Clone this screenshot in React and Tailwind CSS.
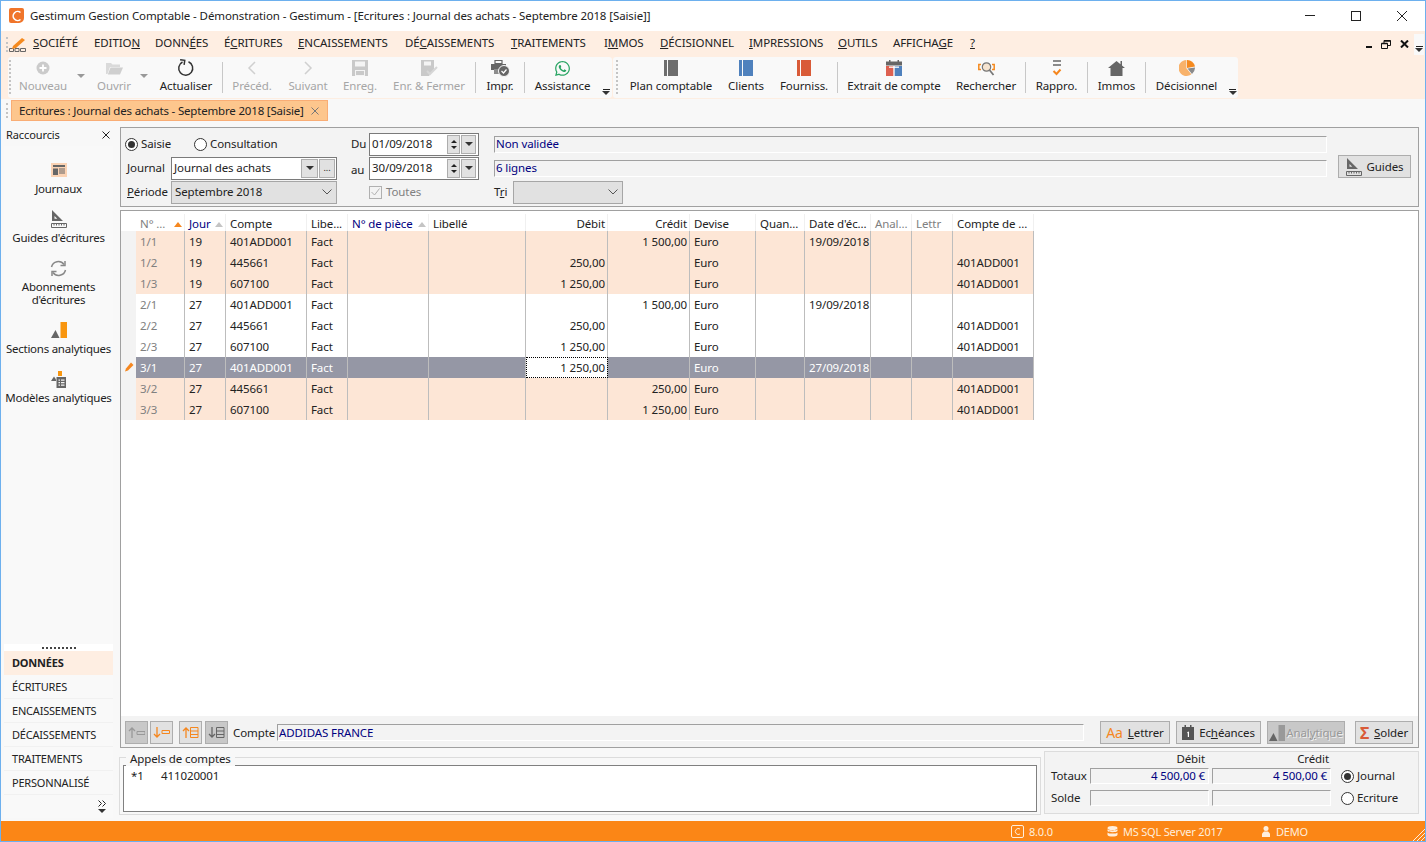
import React from "react";
import { FaWhatsapp } from "react-icons/fa";

const Grip = () => <div className="w-[2px] h-[34px] border-l-2 border-dotted border-[#c4c4c4]" />;
const Sep = () => <div className="w-px h-[31px] self-center bg-[#c8c8c8]" />;
const Caret = ({ className = "" }) => <div className={`w-0 h-0 border-x-[4px] border-x-transparent border-t-[4px] border-t-[#333] ${className}`} />;
const Overflow = ({ className = "" }) => (
  <div className={`flex flex-col items-center ${className}`}>
    <div className="w-[7px] h-px bg-[#222] mb-px" />
    <Caret />
  </div>
);

// toolbar icons
const Plus = () => (
  <svg width="14" height="14" viewBox="0 0 14 14"><circle cx="7" cy="7" r="6.500" fill="#cbcbcb" /><path d="M7 3.500v7M3.500 7h7" stroke="#fff" strokeWidth="1.800" /></svg>
);
const Folder = () => (
  <svg width="17" height="14" viewBox="0 0 17 14"><path d="M0 2h5l1.500 1.500H14V6H4L1.500 13H0z" fill="#dadada" /><path d="M4.500 6.500H17L14 13.500H1.800z" fill="#cfcfcf" /></svg>
);
const Refresh = () => (
  <svg width="18" height="18" viewBox="0 0 18 18" fill="none"><path d="M11.500 2.800A7 7 0 1 1 5.500 3" stroke="#333" strokeWidth="1.500" /><path d="M2.800 1H7.500V5.600" stroke="#333" strokeWidth="1.500" transform="rotate(8 5 3)" /></svg>
);
const ChevL = () => <svg width="10" height="14" viewBox="0 0 10 14" fill="none"><path d="M8 1L2 7l6 6" stroke="#d0d0d0" strokeWidth="1.500" /></svg>;
const ChevR = () => <svg width="10" height="14" viewBox="0 0 10 14" fill="none"><path d="M2 1l6 6-6 6" stroke="#d0d0d0" strokeWidth="1.500" /></svg>;
const Floppy = () => (
  <svg width="16" height="16" viewBox="0 0 16 16"><path d="M0 0h16v16H0z" fill="#c9c9c9" /><path d="M3 1.500h10v5H3zM3 10h10v6H3z" fill="#f4f4f4" /><path d="M4 11h8v4H4z" fill="#c9c9c9" /></svg>
);
const FloppyOk = () => (
  <svg width="18" height="16" viewBox="0 0 18 16"><path d="M1 0h13v9l-5 7H1z" fill="#c9c9c9" /><path d="M4 1.500h7v4H4z" fill="#f4f4f4" /><path d="M7 11l3 3 7-7" fill="none" stroke="#d6d6d6" strokeWidth="2" /></svg>
);
const Printer = () => (
  <svg width="19" height="17" viewBox="0 0 19 17"><path d="M4 0.500h7v3H4z" fill="none" stroke="#666" strokeWidth="1.200" /><path d="M0 4h15v6H0z" fill="#666" /><path d="M3 9h8v5H3z" fill="#8d8d8d" /><circle cx="13" cy="11" r="5.500" fill="#666" stroke="#f9f9f9" /><path d="M10.500 11l2 2 3-3.500" fill="none" stroke="#fff" strokeWidth="1.200" /></svg>
);
const Book = ({ color }) => (
  <svg width="14" height="16" viewBox="0 0 14 16"><path d="M0 0h3v16H0zM4 0h10v16H4z" fill={color} /></svg>
);
const Calendar = () => (
  <svg width="16" height="16" viewBox="0 0 16 16"><path d="M0 1.500h16v4H0z" fill="#666" /><path d="M3 0h1.500v2H3zM11.500 0H13v2h-1.500z" fill="#666" /><path d="M0 6h7.300v10H0z" fill="#dd6050" /><path d="M8.700 6H16v10H8.700z" fill="#4f81bd" /><path d="M3 6.500h10v1.300H3z" fill="#fff" /></svg>
);
const Search = () => (
  <svg className="mt-[3px]" width="17" height="15" viewBox="0 0 17 15" fill="none"><path d="M3 2.500H0.800v5H3M14 2.500h2.200v5H14" stroke="#f58a1f" strokeWidth="1.500" /><circle cx="8.500" cy="5" r="4.200" fill="#f6e4d0" stroke="#777" strokeWidth="1.200" /><path d="M11.500 8L15.500 13" stroke="#777" strokeWidth="1.800" /></svg>
);
const Rappro = () => (
  <svg width="10" height="16" viewBox="0 0 10 16" fill="none"><path d="M1 1h8M1 5h8" stroke="#666" strokeWidth="1.600" /><path d="M1.500 11l3 3 4-4.500" stroke="#f5871f" strokeWidth="2" /></svg>
);
const House = () => (
  <svg width="17" height="16" viewBox="0 0 17 16"><path d="M8.500 1L0 8h2.500v8h12V8H17l-3-2.500V1h-1.500v3.200z" fill="#666" /></svg>
);
const Pie = () => (
  <svg width="16" height="16" viewBox="0 0 16 16"><path d="M8 8V0a8 8 0 0 1 8 6.500z" fill="#f58a1f" /><path d="M8.500 8.500L16 7.500a8 8 0 0 1-3 6.500z" fill="#8a8a8a" /><path d="M7.400 0v8.300l5 6A8 8 0 1 1 7.400 0z" fill="#f8b26a" /></svg>
);
const SetSquare = ({ color = "#666" }) => (
  <svg width="16" height="18" viewBox="0 0 16 18"><path d="M1 0l11 11H1zM3.500 6v2.800h2.800z" fill={color} fillRule="evenodd" /><path d="M0.500 13.500h15v4h-15z" fill="none" stroke={color} /><path d="M3 14v1.500M5.500 14v1.500M8 14v1.500M10.500 14v1.500M13 14v1.500" stroke={color} /></svg>
);

const leftTools = [
  { label: "Nouveau", w: "w-[58px]", icon: <Plus />, off: true },
  { caret: true, w: "w-[18px]" },
  { label: "Ouvrir", w: "w-[48px]", icon: <Folder />, off: true },
  { caret: true, w: "w-[12px]" },
  { label: "Actualiser", w: "w-[72px]", icon: <Refresh /> },
  { sep: true },
  { label: "Précéd.", w: "w-[58px]", icon: <ChevL />, off: true },
  { label: "Suivant", w: "w-[54px]", icon: <ChevR />, off: true },
  { label: "Enreg.", w: "w-[50px]", icon: <Floppy />, off: true },
  { label: "Enr. & Fermer", w: "w-[88px] mr-[2px]", icon: <FloppyOk />, off: true },
  { sep: true },
  { label: "Impr.", w: "w-[48px]", icon: <Printer /> },
  { sep: true },
  { label: "Assistance", w: "w-[75px]", icon: <FaWhatsapp className="text-[17px] text-[#2aa564]" /> },
];
const rightTools = [
  { label: "Plan comptable", w: "w-[100px]", icon: <Book color="#6d6d6d" /> },
  { label: "Clients", w: "w-[50px]", icon: <Book color="#4f81bd" /> },
  { label: "Fourniss.", w: "w-[66px]", icon: <Book color="#d95b38" /> },
  { sep: true },
  { label: "Extrait de compte", w: "w-[112px]", icon: <Calendar /> },
  { label: "Rechercher", w: "w-[72px] mr-[3px]", icon: <Search /> },
  { sep: true },
  { label: "Rappro.", w: "w-[61px]", icon: <Rappro /> },
  { sep: true },
  { label: "Immos", w: "w-[57px]", icon: <House /> },
  { sep: true },
  { label: "Décisionnel", w: "w-[81px]", icon: <Pie /> },
];

const Tool = ({ t }) => {
  if (t.sep) return <Sep />;
  if (t.caret)
    return (
      <div className={`${t.w} flex justify-center pt-[17px]`}>
        <div className="w-0 h-0 border-x-[4px] border-x-transparent border-t-[4px] border-t-[#999]" />
      </div>
    );
  return (
    <div className={`${t.w} flex flex-col items-center shrink-0 whitespace-nowrap ${t.off ? "text-[#a6a6a6]" : "text-[#222]"}`}>
      <div className="h-[21px] pt-px flex items-center justify-center">{t.icon}</div>
      <div className="leading-[16px]">{t.label}</div>
    </div>
  );
};

const menu = [
  [<><u>S</u>OCIÉTÉ</>, "w-[61px]"],
  [<>EDITIO<u>N</u></>, "w-[61px]"],
  [<>DONN<u>É</u>ES</>, "w-[69px]"],
  [<>É<u>C</u>RITURES</>, "w-[74px]"],
  [<><u>E</u>NCAISSEMENTS</>, "w-[107px]"],
  [<>DÉ<u>C</u>AISSEMENTS</>, "w-[106px]"],
  [<><u>T</u>RAITEMENTS</>, "w-[93px]"],
  [<>I<u>M</u>MOS</>, "w-[56px]"],
  [<><u>D</u>ÉCISIONNEL</>, "w-[89px]"],
  [<><u>I</u>MPRESSIONS</>, "w-[89px]"],
  [<><u>O</u>UTILS</>, "w-[55px]"],
  [<>AFFICHA<u>G</u>E</>, "w-[77px]"],
  [<u>?</u>, "w-[20px]"],
];

const gridCols = "grid grid-cols-[15px_49px_41px_81px_41px_81px_97px_82px_82px_66px_49px_66px_41px_41px_81px]";
const gridInner = "grid grid-cols-[49px_41px_81px_41px_81px_97px_82px_82px_66px_49px_66px_41px_41px_81px]";

const rows = [
  ["1/1", "19", "401ADD001", "", "1 500,00", "19/09/2018", "", "p"],
  ["1/2", "19", "445661", "250,00", "", "", "401ADD001", "p"],
  ["1/3", "19", "607100", "1 250,00", "", "", "401ADD001", "p"],
  ["2/1", "27", "401ADD001", "", "1 500,00", "19/09/2018", "", "w"],
  ["2/2", "27", "445661", "250,00", "", "", "401ADD001", "w"],
  ["2/3", "27", "607100", "1 250,00", "", "", "401ADD001", "w"],
  ["3/1", "27", "401ADD001", "1 250,00", "", "27/09/2018", "", "s"],
  ["3/2", "27", "445661", "", "250,00", "", "401ADD001", "p"],
  ["3/3", "27", "607100", "", "1 250,00", "", "401ADD001", "p"],
];

const Cell = ({ children, right, focus, className = "" }) => (
  <div className={`border-r border-[#bdbdbd] whitespace-nowrap overflow-hidden flex items-center ${right ? "justify-end pr-[2px]" : "pl-[4px]"} ${focus ? "bg-white text-[#222] outline-1 outline-dotted outline-black -outline-offset-1" : ""} ${className}`}>
    {children}
  </div>
);

const Head = ({ children, right, sort, className = "" }) => (
  <div className={`border-r border-[#f0f0f0] whitespace-nowrap overflow-hidden pt-[3px] flex items-center ${right ? "justify-end pr-[2px]" : "justify-between pl-[4px] pr-[2px]"} ${className}`}>
    <span>{children}</span>
    {sort && <div className={`w-0 h-0 border-x-[4px] border-x-transparent border-b-[5px] ${sort}`} />}
  </div>
);

const Row = ({ r }) => {
  const [n, jour, compte, debit, credit, date, contre, kind] = r;
  const bg = kind === "p" ? "bg-[#fde6d6]" : kind === "s" ? "bg-[#9597a5] text-white" : "bg-white";
  return (
    <div className={`${gridCols} h-[21px] text-[#222]`}>
      <div className="bg-[#f3f3f3] flex items-center justify-center">
        {kind === "s" && (
          <svg width="10" height="11" viewBox="0 0 10 11"><path d="M7 0.500l2.500 2.500-5.500 5.500L1 9.500l1-3z" fill="#f5871f" /></svg>
        )}
      </div>
      <div className={`col-span-14 ${gridInner} ${bg}`}>
        <Cell className={kind === "s" ? "" : "text-[#808080]"}>{n}</Cell>
        <Cell>{jour}</Cell>
        <Cell>{compte}</Cell>
        <Cell>Fact</Cell>
        <Cell />
        <Cell />
        <Cell right focus={kind === "s"}>{debit}</Cell>
        <Cell right>{credit}</Cell>
        <Cell>Euro</Cell>
        <Cell />
        <Cell>{date}</Cell>
        <Cell />
        <Cell />
        <Cell>{contre}</Cell>
      </div>
    </div>
  );
};

const Radio = ({ on }) => (
  <div className="w-[13px] h-[13px] rounded-full border border-[#333] bg-white flex items-center justify-center shrink-0">
    {on && <div className="w-[7px] h-[7px] rounded-full bg-[#333]" />}
  </div>
);
const Sunken = ({ children, className = "" }) => (
  <div className={`border-t border-l border-[#a0a0a0] border-b border-r border-b-white border-r-white flex items-center px-px text-[#000080] whitespace-nowrap ${className}`}>
    {children}
  </div>
);
const Btn = ({ children, className = "" }) => (
  <div className={`h-[23px] border border-[#adadad] flex items-center justify-center ${className}`}>{children}</div>
);
const Chevron = () => <svg width="10" height="6" viewBox="0 0 10 6" fill="none"><path d="M0.500 0.500L5 5l4.500-4.500" stroke="#555" /></svg>;

const DateBox = ({ value }) => (
  <div className="w-[110px] h-[23px] border border-[#7a7a7a] bg-white flex items-center">
    <span className="pl-[2px] w-[77px] text-[#222]">{value}</span>
    <div className="w-[13px] h-[19px] bg-[#e1e1e1] border border-[#adadad] flex flex-col items-center justify-center gap-[3px]">
      <div className="w-0 h-0 border-x-[3px] border-x-transparent border-b-[3px] border-b-[#222]" />
      <div className="w-0 h-0 border-x-[3px] border-x-transparent border-t-[3px] border-t-[#222]" />
    </div>
    <div className="ml-px w-[15px] h-[19px] bg-[#e1e1e1] border border-[#adadad] flex items-center justify-center"><Caret /></div>
  </div>
);

const ArrowBtn = ({ children, dark }) => (
  <div className={`w-[23px] h-[23px] border border-[#adadad] flex items-center justify-center ${dark ? "bg-[#c8c8c8]" : "bg-[#e1e1e1]"}`}>{children}</div>
);

const sideTop = [
  { label: ["Journaux"], h: "h-[49px]", icon: (
    <svg width="16" height="14" viewBox="0 0 16 14"><path d="M0 0h16v14H0z" fill="#fbd3b4" /><path d="M2 2h12v2H2zM2 5.500h5V12H2zM8 5.500h6v1H8zM8 7.500h6v1H8zM8 9.500h6v1H8z" fill="#666" /></svg>
  ) },
  { label: ["Guides d'écritures"], h: "h-[49px]", icon: <SetSquare /> },
  { label: ["Abonnements", "d'écritures"], h: "h-[62px]", icon: (
    <svg width="17" height="17" viewBox="0 0 17 17" fill="none"><path d="M1.500 7A7 7 0 0 1 14 4.500M15.500 10A7 7 0 0 1 3 12.500" stroke="#888" strokeWidth="1.500" /><path d="M15 1v4.500h-4.500M2 16v-4.500h4.500" stroke="#888" strokeWidth="1.500" /></svg>
  ) },
  { label: ["Sections analytiques"], h: "h-[49px]", icon: (
    <svg width="16" height="16" viewBox="0 0 16 16"><path d="M0 16L4.500 8l4 8z" fill="#666" /><path d="M9.500 0H16v16H9.500z" fill="#f9960f" /></svg>
  ) },
  { label: ["Modèles analytiques"], h: "h-[49px]", icon: (
    <svg width="15" height="17" viewBox="0 0 15 17"><path d="M7 0h4v5H7z" fill="#f9960f" /><path d="M0 10l3-4.500 2 3V10z" fill="#666" /><path d="M5.500 6H15v11H5.500z" fill="#666" /><path d="M7.500 8.500h1.500v1.200H7.500zM10 8.500h3.500v1.200H10zM7.500 11h1.500v1.200H7.500zM10 11h3.500v1.200H10zM7.500 13.500h1.500v1.200H7.500zM10 13.500h3.500v1.200H10z" fill="#f3f3f3" /></svg>
  ) },
];
const sideBottom = ["ÉCRITURES", "ENCAISSEMENTS", "DÉCAISSEMENTS", "TRAITEMENTS", "PERSONNALISÉ"];

export default function App() {
  return (
    <div className="w-[1426px] h-[842px] flex flex-col overflow-hidden border border-[#6db0ee] bg-[#f8f8f8] text-[11.500px] tracking-[-0.1px] leading-[16px] text-[#222] font-['Noto_Sans',sans-serif]">
      {/* title bar */}
      <div className="h-[30px] shrink-0 bg-white flex items-center pb-px">
        <div className="w-[15px] h-[15px] ml-[8px] rounded-[2px] rounded-br-[5px] bg-[#f0752a] flex items-center justify-center">
          <svg width="12" height="12" viewBox="0 0 12 12" fill="none"><path d="M9.500 2.500A4.500 4.500 0 1 0 9.500 9.500" stroke="#fff" strokeWidth="1.600" /></svg>
        </div>
        <span className="ml-[6px]">Gestimum Gestion Comptable - Démonstration - Gestimum - [Ecritures : Journal des achats - Septembre 2018 [Saisie]]</span>
        <div className="ml-auto flex items-center">
          <div className="w-[46px] flex justify-center"><div className="w-[10px] h-px bg-[#222]" /></div>
          <div className="w-[46px] flex justify-center"><div className="w-[10px] h-[10px] border border-[#222]" /></div>
          <div className="w-[46px] flex justify-center">
            <svg width="10" height="10" viewBox="0 0 10 10"><path d="M0 0l10 10M10 0L0 10" stroke="#222" /></svg>
          </div>
        </div>
      </div>
      {/* menu bar */}
      <div className="h-[26px] shrink-0 bg-[#feeee2] flex items-center">
        <div className="w-[6px] ml-[5px] h-[15px] border-l-2 border-dotted border-[#c4c4c4]" />
        <svg className="-ml-[3px]" width="17" height="15" viewBox="0 0 17 15" fill="none"><path d="M0.500 14.500h4v-3h-4zM6 14.500h4v-3H6zM11.500 14.500h5v-3h-5z" stroke="#666" /><path d="M4 9l9-8 3 2-9 8-4 1z" fill="#f58a1f" /></svg>
        <div className="ml-[7px] flex items-center pb-[2px]">
          {menu.map(([label, w], i) => (
            <div key={i} className={`${w} whitespace-nowrap`}>{label}</div>
          ))}
        </div>
        <div className="ml-auto flex items-center h-full">
          <div className="w-[6px] h-[2px] bg-[#111] mt-[6px]" />
          <svg className="ml-[9px]" width="10" height="9" viewBox="0 0 10 9" fill="none"><path d="M0.500 3.500h6v5h-6zM3 3V0.500h6.500v5H7" stroke="#111" /><path d="M0.500 3.500h6M3 1h6.500" stroke="#111" strokeWidth="1.500" /></svg>
          <svg className="ml-[9px]" width="9" height="8" viewBox="0 0 9 8"><path d="M1 0.500l7 7M8 0.500l-7 7" stroke="#111" strokeWidth="2" /></svg>
          <div className="ml-[5px] w-[10px] h-[21px] bg-[#f9f9f9] flex items-end justify-center pb-[3px]"><Overflow /></div>
          <div className="w-px" />
        </div>
      </div>
      {/* toolbar */}
      <div className="h-[41px] shrink-0 bg-[#feeee2] flex pl-[7px] gap-px">
        <div className="w-[604px] bg-[#f9f9f9] rounded-[3px] flex">
          <div className="w-[6px] pt-[3px] pl-px"><Grip /></div>
          {leftTools.map((t, i) => <Tool key={i} t={t} />)}
          <Overflow className="w-[12px] mt-auto mb-[3px]" />
        </div>
        <div className="w-[625px] bg-[#f9f9f9] rounded-[3px] flex">
          <div className="w-[8px] pt-[3px] pl-[3px]"><Grip /></div>
          {rightTools.map((t, i) => <Tool key={i} t={t} />)}
          <Overflow className="w-[11px] mt-auto mb-[3px]" />
        </div>
      </div>
      {/* tabs */}
      <div className="h-[26px] shrink-0 flex items-center border-t border-[#fdeee2] pb-[2px]">
        <div className="w-[4px] ml-[5px] h-[15px] border-l-2 border-dotted border-[#c4c4c4]" />
        <div className="h-[21px] w-[317px] ml-px bg-[#fdc68d] border border-[#f9ad75] flex items-center pl-[7px] whitespace-nowrap tracking-[-0.18px]">
          <span>Ecritures : Journal des achats - Septembre 2018 [Saisie]</span>
          <svg className="ml-[7px]" width="8" height="8" viewBox="0 0 8 8"><path d="M0.500 0.500l7 7M7.500 0.500l-7 7" stroke="#777" /></svg>
        </div>
      </div>
      {/* body */}
      <div className="flex-1 flex min-h-0">
        {/* shortcuts */}
        <div className="w-[118px] shrink-0 flex flex-col pb-[3px]">
          <div className="h-[22px] flex items-center justify-between pl-[5px] pr-[9px] text-[11px]">
            <span>Raccourcis</span>
            <svg width="8" height="8" viewBox="0 0 8 8"><path d="M0.500 0.500l7 7M7.500 0.500l-7 7" stroke="#222" /></svg>
          </div>
          <div className="ml-[3px] w-[109px] flex-1 flex flex-col bg-[#f9f9f9]">
            <div className="pt-[15px]">
              {sideTop.map((s) => (
                <div key={s.label[0]} className={`${s.h} flex flex-col items-center text-center whitespace-nowrap`}>
                  <div className="h-[18px] flex items-center">{s.icon}</div>
                  <div className="mt-[3px] leading-[13px] tracking-[-0.25px]">
                    {s.label.map((l) => <div key={l}>{l}</div>)}
                  </div>
                </div>
              ))}
            </div>
            <div className="mt-auto bg-white h-[7px] flex items-center justify-center">
              <div className="w-[34px] border-t-2 border-dotted border-[#444]" />
            </div>
            <div className="h-[24px] bg-[#feeee2] flex items-center pl-[8px] font-bold text-[11px] tracking-[-0.2px]">DONNÉES</div>
            {sideBottom.map((s) => (
              <div key={s} className="h-[24px] border-b border-[#f1f1f1] flex items-center pl-[8px] text-[11px] tracking-[-0.2px]">{s}</div>
            ))}
            <div className="h-[23px] flex flex-col items-end pr-[7px] pt-[5px]">
              <svg width="8" height="7" viewBox="0 0 8 7" fill="none"><path d="M0.500 0.500l3 3-3 3M4.500 0.500l3 3-3 3" stroke="#222" /></svg>
              <Caret className="mt-[2px]" />
            </div>
          </div>
        </div>
        {/* main */}
        <div className="flex-1 flex flex-col pl-px pr-[7px] pt-[3px] pb-[6px]">
          {/* filters */}
          <div className="h-[80px] shrink-0 border border-[#a0a0a0] bg-[#f3f3f3] flex pt-[4px] pl-[4px]">
            <div className="w-[212px] shrink-0 flex flex-col">
              <div className="h-[24px] flex items-center">
                <Radio on />
                <span className="ml-[3px] w-[40px]">Saisie</span>
                <div className="ml-[13px]"><Radio /></div>
                <span className="ml-[3px]">Consultation</span>
              </div>
              <div className="h-[24px] flex items-center">
                <span className="ml-[2px] w-[44px]"><u>J</u>ournal</span>
                <div className="w-[166px] h-[23px] border border-[#7a7a7a] bg-white flex items-center">
                  <span className="pl-[2px] w-[129px] whitespace-nowrap">Journal des achats</span>
                  <div className="w-[17px] h-[19px] bg-[#e1e1e1] border border-[#adadad] flex items-center justify-center"><Caret /></div>
                  <div className="ml-px w-[16px] h-[19px] bg-[#e1e1e1] border border-[#adadad] flex items-center justify-center text-[9px]">...</div>
                </div>
              </div>
              <div className="h-[24px] flex items-center">
                <span className="ml-[2px] w-[44px]"><u>P</u>ériode</span>
                <div className="w-[166px] h-[23px] border border-[#a6a6a6] bg-[#e1e1e1] flex items-center justify-between pl-[3px] pr-[4px]">
                  <span>Septembre 2018</span>
                  <Chevron />
                </div>
              </div>
            </div>
            <div className="ml-[14px] w-[128px] shrink-0 flex flex-col">
              <div className="h-[24px] flex items-center"><span className="w-[18px]">Du</span><DateBox value="01/09/2018" /></div>
              <div className="h-[24px] flex items-center"><span className="w-[18px] pt-[3px]">au</span><DateBox value="30/09/2018" /></div>
              <div className="h-[24px] flex items-center pl-[18px] text-[#808080]">
                <div className="w-[13px] h-[13px] border border-[#b0b0b0] flex items-center justify-center">
                  <svg width="9" height="8" viewBox="0 0 9 8" fill="none"><path d="M0.500 4l3 3 5-6.500" stroke="#b0b0b0" /></svg>
                </div>
                <span className="ml-[4px]">Toutes</span>
              </div>
            </div>
            <div className="ml-[15px] w-[833px] shrink-0 flex flex-col">
              <div className="h-[24px] flex items-center"><Sunken className="w-full h-[17px]">Non validée</Sunken></div>
              <div className="h-[24px] flex items-center"><Sunken className="w-full h-[17px]">6 lignes</Sunken></div>
              <div className="h-[24px] flex items-center">
                <span className="w-[19px]">T<u>r</u>i</span>
                <div className="w-[110px] h-[23px] border border-[#a6a6a6] bg-[#e1e1e1] flex items-center justify-end pr-[4px]"><Chevron /></div>
              </div>
            </div>
            <div className="ml-[11px] h-[48px] flex items-end pb-[2px]">
              <Btn className="w-[73px] gap-[5px] bg-[#e1e1e1]"><SetSquare /><span>Guides</span></Btn>
            </div>
          </div>
          {/* grid */}
          <div className="mt-[3px] flex-1 flex flex-col min-h-0 border border-[#a0a0a0] bg-[#f3f3f3]">
            <div className="flex-1 bg-white pt-[3px]">
              <div className={`${gridCols} h-[17px]`}>
                <div />
                <Head className="text-[#808080]" sort="border-b-[#f5871f]">N° ...</Head>
                <Head className="text-[#000080]" sort="border-b-[#c4c4c4]">Jour</Head>
                <Head>Compte</Head>
                <Head>Libe...</Head>
                <Head className="text-[#000080]" sort="border-b-[#c4c4c4]">N° de pièce</Head>
                <Head>Libellé</Head>
                <Head right>Débit</Head>
                <Head right>Crédit</Head>
                <Head>Devise</Head>
                <Head>Quan...</Head>
                <Head>Date d'éc...</Head>
                <Head className="text-[#808080]">Anal...</Head>
                <Head className="text-[#808080]">Lettr</Head>
                <Head>Compte de ...</Head>
              </div>
              {rows.map((r) => <Row key={r[0]} r={r} />)}
            </div>
            <div className="h-[31px] shrink-0 flex items-center pl-[4px] pt-[2px]">
              <ArrowBtn dark>
                <svg width="17" height="13" viewBox="0 0 17 13" fill="none"><path d="M4 12V2M1 5l3-3 3 3" stroke="#999" strokeWidth="1.300" /><path d="M9 5.500h8v3H9z" stroke="#999" /></svg>
              </ArrowBtn>
              <div className="ml-[2px]">
                <ArrowBtn>
                  <svg width="17" height="13" viewBox="0 0 17 13" fill="none"><path d="M4 1v10M1 8l3 3 3-3" stroke="#f5871f" strokeWidth="1.300" /><path d="M9 4.500h7.500v3H9z" stroke="#f5871f" /></svg>
                </ArrowBtn>
              </div>
              <div className="ml-[6px]">
                <ArrowBtn>
                  <svg width="17" height="13" viewBox="0 0 17 13" fill="none"><path d="M4 12V2M1 5l3-3 3 3" stroke="#f5871f" strokeWidth="1.300" /><path d="M8.500 1.500h7.500v10H8.500zM8.500 5h7.500M8.500 8.500h7.500" stroke="#f5871f" /></svg>
                </ArrowBtn>
              </div>
              <div className="ml-[3px]">
                <ArrowBtn dark>
                  <svg width="17" height="13" viewBox="0 0 17 13" fill="none"><path d="M4 1v10M1 8l3 3 3-3" stroke="#666" strokeWidth="1.300" /><path d="M8.500 1.500h7.500v10H8.500zM8.500 5h7.500M8.500 8.500h7.500" stroke="#666" /></svg>
                </ArrowBtn>
              </div>
              <span className="ml-[5px] w-[44px]">Compte</span>
              <Sunken className="w-[807px] h-[17px]">ADDIDAS FRANCE</Sunken>
              <Btn className="ml-[16px] w-[70px] gap-[5px] bg-[#e1e1e1]">
                <span className="text-[#f5871f] text-[14px] leading-none">Aa</span><span><u>L</u>ettrer</span>
              </Btn>
              <Btn className="ml-[6px] w-[85px] gap-[5px] bg-[#e1e1e1]">
                <svg width="12" height="15" viewBox="0 0 12 15"><path d="M0 2h12v13H0z" fill="#555" /><path d="M2.500 0H4v2H2.500zM8 0h1.500v2H8z" fill="#555" /><path d="M5.500 7L7 6.500V12H5.800V8L5 8.200z" fill="#fff" /></svg>
                <span>Ec<u>h</u>éances</span>
              </Btn>
              <Btn className="ml-[6px] w-[78px] gap-px bg-[#c8c8c8]">
                <svg width="16" height="16" viewBox="0 0 16 16"><path d="M0 16L4.500 8l4 8z" fill="#666" /><path d="M9.500 0H16v16H9.500z" fill="#999" /></svg>
                <span className="text-[#999] [text-shadow:1px_1px_#eee]">Anal<u>y</u>tique</span>
              </Btn>
              <Btn className="ml-[10px] w-[58px] gap-[5px] bg-[#e1e1e1]">
                <span className="text-[#d95b38] text-[16px] font-bold leading-none">Σ</span><span><u>S</u>older</span>
              </Btn>
            </div>
          </div>
          {/* bottom */}
          <div className="mt-[3px] h-[64px] shrink-0 flex">
            <div className="w-[922px] -ml-px h-[58px] mt-[6px] border border-[#dcdcdc] px-[3px] pt-[7px] relative">
              <span className="absolute left-[6px] -top-[6px] px-[4px] bg-[#f8f8f8] leading-[14px]">Appels de comptes</span>
              <div className="h-[47px] w-[914px] border border-[#808080] bg-white flex pt-[2px] pl-[7px]">
                <span className="w-[30px]">*1</span>
                <span>411020001</span>
              </div>
            </div>
            <div className="ml-[3px] w-[375px] h-[63px] border border-[#dcdcdc] bg-[#f3f3f3]">
              <div className="flex h-[13px] leading-[13px] pl-[45px]">
                <div className="w-[115px] text-right">Débit</div>
                <div className="w-[124px] text-right">Crédit</div>
              </div>
              <div className="flex items-center h-[22px] pl-[6px]">
                <span className="w-[39px]">Totaux</span>
                <Sunken className="w-[119px] h-[16px] justify-end pr-[3px]">4 500,00 €</Sunken>
                <Sunken className="ml-[3px] w-[119px] h-[16px] justify-end pr-[3px]">4 500,00 €</Sunken>
                <div className="ml-[10px]"><Radio on /></div>
                <span className="ml-[3px]">Journal</span>
              </div>
              <div className="flex items-center h-[22px] pl-[6px]">
                <span className="w-[39px]">Solde</span>
                <Sunken className="w-[119px] h-[16px]" />
                <Sunken className="ml-[3px] w-[119px] h-[16px]" />
                <div className="ml-[10px]"><Radio /></div>
                <span className="ml-[3px]">Ecriture</span>
              </div>
            </div>
          </div>
        </div>
      </div>
      {/* status bar */}
      <div className="h-[20px] shrink-0 bg-[#fb8616] text-[#ffeedd] flex items-center text-[11px] tracking-[-0.2px]">
        <div className="ml-[1010px] w-[13px] h-[13px] border border-[#ffeedd] rounded-[2px] flex items-center justify-center">
          <svg width="9" height="9" viewBox="0 0 9 9" fill="none"><path d="M7 2a3 3 0 1 0 0 5" stroke="#ffeedd" /></svg>
        </div>
        <span className="ml-[5px] w-[78px] pt-px">8.0.0</span>
        <svg width="11" height="11" viewBox="0 0 11 11"><ellipse cx="5.500" cy="2" rx="5" ry="2" fill="#ffeedd" /><path d="M0.500 3.200c1 1.600 9 1.600 10 0V5c-1 1.600-9 1.600-10 0zM0.500 6.400c1 1.600 9 1.600 10 0V9c-1 2-9 2-10 0z" fill="#ffeedd" /></svg>
        <span className="ml-[5px] w-[138px] whitespace-nowrap pt-px">MS SQL Server 2017</span>
        <svg width="10" height="11" viewBox="0 0 10 11"><circle cx="5" cy="2.500" r="2.500" fill="#ffeedd" /><path d="M1 11V7.500L3 5.500h4l2 2V11z" fill="#ffeedd" /></svg>
        <span className="ml-[5px] pt-px">DEMO</span>
        <svg className="ml-auto self-end" width="13" height="13" viewBox="0 0 13 13"><path d="M13 1L1 13M13 5L5 13M13 9L9 13" stroke="#ffeedd" /></svg>
      </div>
    </div>
  );
}
